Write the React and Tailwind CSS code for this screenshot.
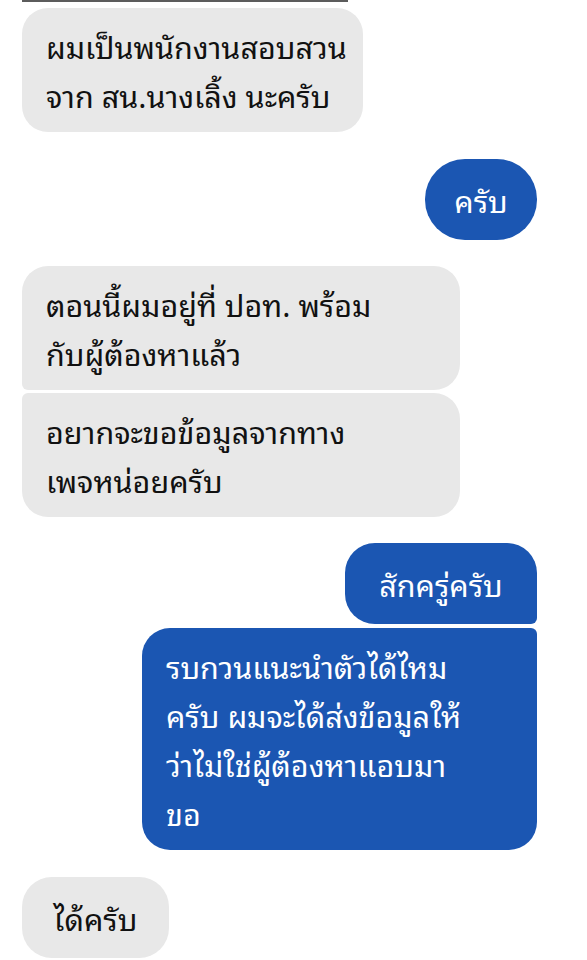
import React from "react";

const font = { fontFamily: '"Noto Sans Thai Looped", "Noto Sans Thai", "Noto Sans", sans-serif' };

const messages = [
  { id: 1, me: false, w: "w-[341px]", corners: "rounded-[26px]", mt: "mt-[6px]", lines: ["ผมเป็นพนักงานสอบสวน", "จาก สน.นางเลิ้ง นะครับ"] },
  { id: 2, me: true, w: "w-[112px]", corners: "rounded-[40px]", mt: "mt-[27px]", lines: ["ครับ"] },
  { id: 3, me: false, w: "w-[438px]", corners: "rounded-[26px] rounded-bl-[6px]", mt: "mt-[26px]", lines: ["ตอนนี้ผมอยู่ที่ ปอท. พร้อม", "กับผู้ต้องหาแล้ว"] },
  { id: 4, me: false, w: "w-[438px]", corners: "rounded-[26px] rounded-tl-[6px]", mt: "mt-[3px]", lines: ["อยากจะขอข้อมูลจากทาง", "เพจหน่อยครับ"] },
  { id: 5, me: true, w: "w-[192px]", corners: "rounded-[30px] rounded-br-[6px]", mt: "mt-[26px]", lines: ["สักครู่ครับ"] },
  { id: 6, me: true, w: "w-[395px]", corners: "rounded-[28px] rounded-tr-[6px]", mt: "mt-[4px]", lines: ["รบกวนแนะนำตัวได้ไหม", "ครับ ผมจะได้ส่งข้อมูลให้", "ว่าไม่ใช่ผู้ต้องหาแอบมา", "ขอ"] },
  { id: 7, me: false, w: "w-[147px]", corners: "rounded-[30px]", mt: "mt-[27px]", lines: ["ได้ครับ"] },
];

const Bubble = ({ m }) => {
  const single = m.lines.length === 1;
  return (
    <div className={`flex ${m.me ? "justify-end pr-[50px]" : "justify-start pl-[22px]"} ${m.mt}`}>
      <div
        className={`${m.w} ${m.corners} ${
          m.me ? "bg-[#1b56b2] text-white" : "bg-[#e8e8e8] text-[#111111]"
        } ${single ? "py-4 text-center" : "py-[13px] pl-[24px]"} text-[30.5px] leading-[49px] whitespace-nowrap`}
      >
        {m.lines.map((l, i) => (
          <div key={i}>{l}</div>
        ))}
      </div>
    </div>
  );
};

export default function App() {
  return (
    <div className="w-[587px] h-[960px] overflow-hidden bg-white" style={font}>
      {/* tail of the previous bubble */}
      <div className="ml-[22px] w-[326px] h-[2px] bg-[#5c5c5c]" />
      {messages.map((m) => (
        <Bubble key={m.id} m={m} />
      ))}
    </div>
  );
}
